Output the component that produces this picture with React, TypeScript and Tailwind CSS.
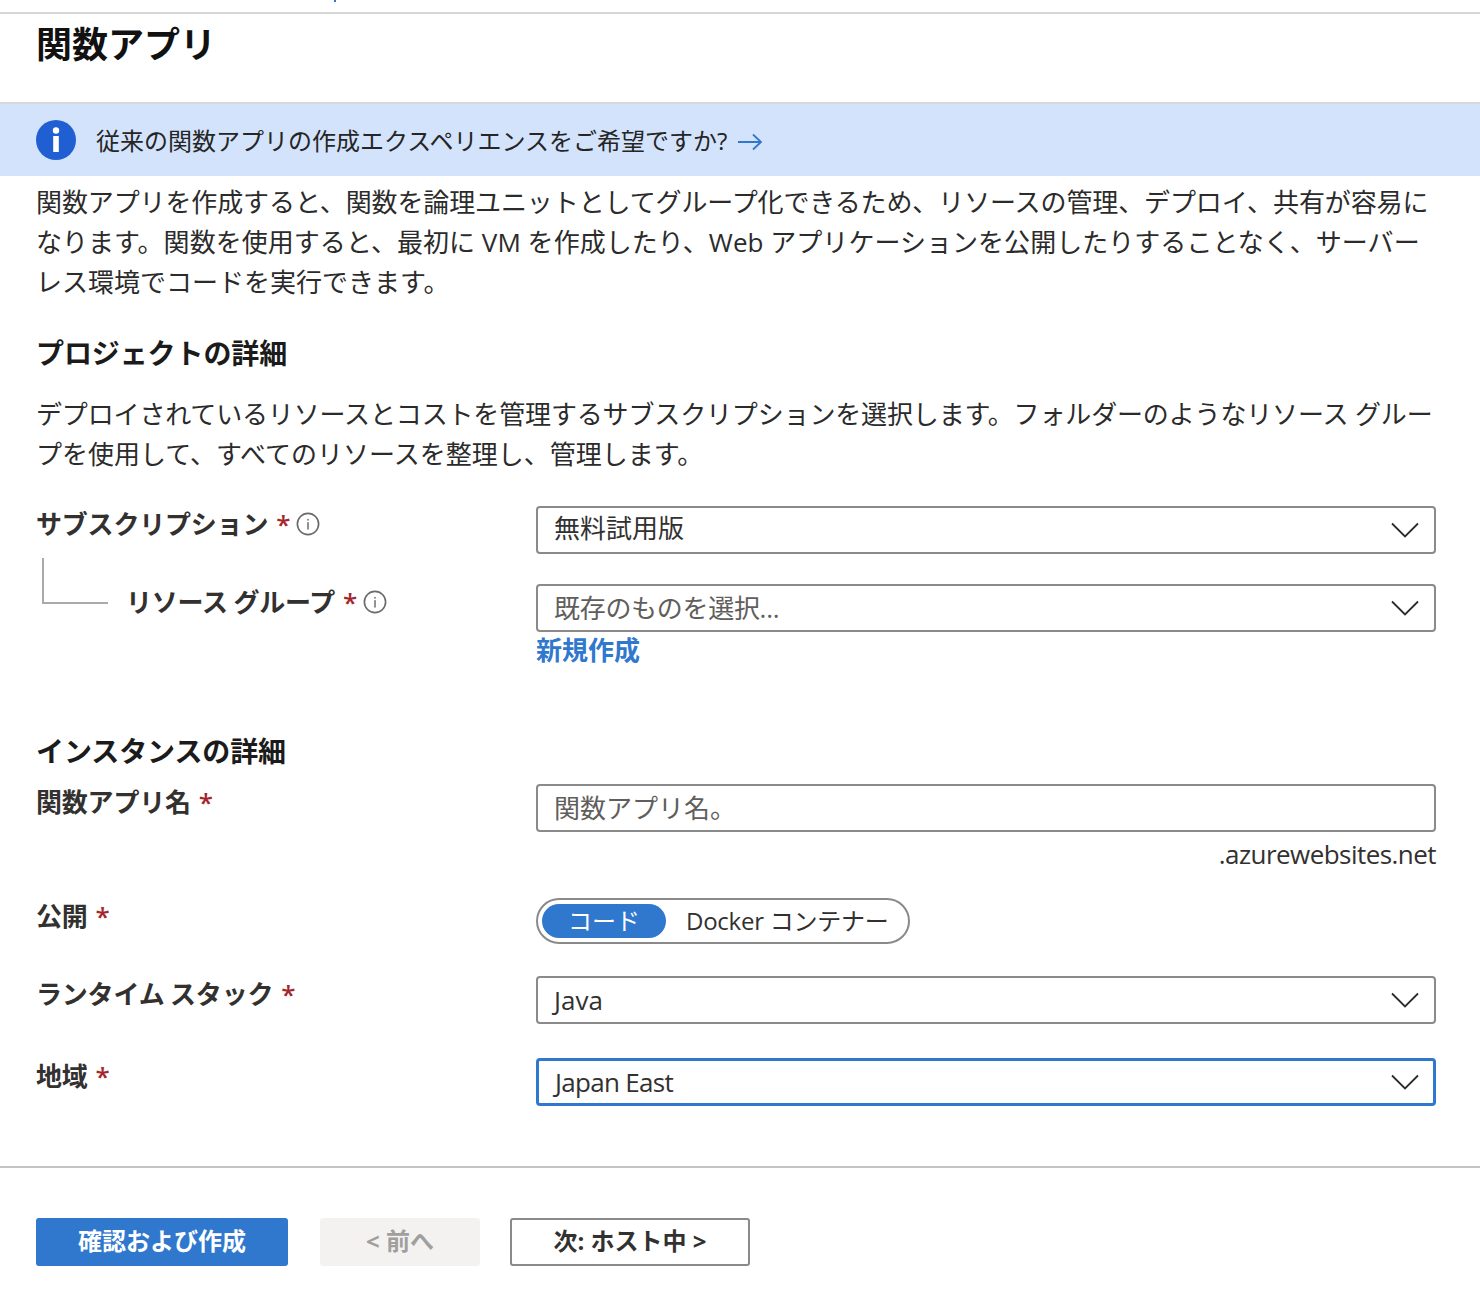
const font = "font-['Open_Sans','Noto_Sans_CJK_JP',sans-serif]";

function Chevron() {
  return (
    <svg width="28" height="16" viewBox="0 0 28 16" fill="none" className="shrink-0">
      <path d="M1 1.5 14 14.5 27 1.5" stroke="#2b2b2b" strokeWidth="1.8" />
    </svg>
  );
}

function InfoDot() {
  return (
    <svg width="24" height="24" viewBox="0 0 26 26" fill="none" className="ml-[6px] shrink-0">
      <circle cx="13" cy="13" r="11.5" stroke="#6b6b6b" strokeWidth="1.8" />
      <rect x="12.2" y="11" width="1.6" height="8" fill="#6b6b6b" />
      <rect x="12.2" y="7.5" width="1.6" height="1.8" fill="#6b6b6b" />
    </svg>
  );
}

function Label({ text, info }: { text: string; info?: boolean }) {
  return (
    <div className="flex items-center h-[36px] text-[26px] font-bold tracking-[-0.2px] text-[#323130] whitespace-nowrap [word-spacing:-1px]">
      <span>{text}</span>
      <span className="ml-[8px] text-[#a4262c] font-semibold">*</span>
      {info && <InfoDot />}
    </div>
  );
}

function Select({ value, muted, focused, textClass }: { value: string; muted?: boolean; focused?: boolean; textClass?: string }) {
  return (
    <div
      className={`flex items-center justify-between h-[48px] rounded-[4px] bg-white pl-[16px] text-[26px] ${
        focused ? "border-[3px] border-[#2f78ce] pr-[14px]" : "border-2 border-[#8a8a8a] pr-[15px]"
      } ${muted ? "text-[#605e5c]" : "text-[#323130]"}`}
    >
      <span className={textClass}>{value}</span>
      <Chevron />
    </div>
  );
}

export default function App() {
  return (
    <div className={`${font} w-[1480px] h-[1294px] bg-white text-[#323130] overflow-hidden`}>
      {/* top edge */}
      <div className="h-[14px] border-b-2 border-[#d6d6d6]">
        <div className="ml-[334px] w-[2px] h-[2px] bg-[#2f78ce]" />
      </div>

      <h1 className="h-[88px] px-[36px] pt-[4px] text-[36px] leading-[54px] font-bold text-[#111]">関数アプリ</h1>

      {/* banner */}
      <div className="flex items-center h-[74px] border-t-2 border-[#d8d8d8] bg-[#d3e3fb] pl-[36px] text-[24px] text-[#252525]">
        <svg width="40" height="40" viewBox="0 0 40 40" className="shrink-0">
          <circle cx="20" cy="20" r="20" fill="#1f5fd2" />
          <circle cx="20" cy="10.5" r="3.2" fill="#fff" />
          <rect x="17.2" y="16" width="5.6" height="16" fill="#fff" />
        </svg>
        <span className="ml-[20px] pt-[2px]">従来の関数アプリの作成エクスペリエンスをご希望ですか?</span>
        <svg width="26" height="18" viewBox="0 0 26 18" fill="none" className="ml-[10px] mt-[4px]">
          <path d="M1 9h23M16 1.5 24 9l-8 7.5" stroke="#2f78ce" strokeWidth="1.8" />
        </svg>
      </div>

      <div className="px-[36px]">
        <p className="mt-[6px] w-[1400px] text-[26px] leading-[40px] text-[#2b2b2b]">
          <span className="tracking-[-0.11px]">関数アプリを作成すると、関数を論理ユニットとしてグループ化できるため、リソースの管理、デプロイ、共有が容易に</span>
          <span className="tracking-[0.04px]">なります。関数を使用すると、最初に VM を作成したり、Web アプリケーションを公開したりすることなく、サーバー</span>
          レス環境でコードを実行できます。
        </p>

        <h2 className="mt-[31px] h-[40px] text-[28px] leading-[40px] tracking-[-0.1px] font-bold text-[#1b1b1b]">プロジェクトの詳細</h2>

        <p className="mt-[21px] w-[1400px] text-[26px] leading-[40px] text-[#2b2b2b]">
          <span className="tracking-[-0.15px]">デプロイされているリソースとコストを管理するサブスクリプションを選択します。フォルダーのようなリソース グルー</span>
          プを使用して、すべてのリソースを整理し、管理します。
        </p>

        {/* subscription */}
        <div className="mt-[32px] grid grid-cols-[500px_900px]">
          <Label text="サブスクリプション" info />
          <Select value="無料試用版" textClass="pb-[4px]" />
        </div>

        {/* resource group */}
        <div className="mt-[30px] grid grid-cols-[500px_900px]">
          <div className="flex items-start">
            <div className="ml-[6px] -mt-[26px] w-[66px] h-[46px] border-l-2 border-b-2 border-[#aaaaaa] shrink-0" />
            <div className="ml-[18px]">
              <Label text="リソース グループ" info />
            </div>
          </div>
          <div>
            <Select value="既存のものを選択..." muted textClass="tracking-[-0.3px]" />
            <div className="h-[37px] text-[26px] leading-[36px] font-bold text-[#2f78ce]">新規作成</div>
          </div>
        </div>

        <h2 className="mt-[62px] h-[40px] text-[28px] leading-[40px] tracking-[-0.1px] font-bold text-[#1b1b1b]">インスタンスの詳細</h2>

        {/* app name */}
        <div className="mt-[13px] grid grid-cols-[500px_900px]">
          <Label text="関数アプリ名" />
          <div>
            <div className="flex items-center h-[48px] rounded-[4px] border-2 border-[#8a8a8a] pl-[16px] text-[26px] text-[#605e5c]">
              関数アプリ名。
            </div>
            <div className="mt-[4px] h-[36px] text-right text-[26px] leading-[36px] tracking-[-0.55px] font-medium text-[#323130]">.azurewebsites.net</div>
          </div>
        </div>

        {/* publish */}
        <div className="mt-[26px] grid grid-cols-[500px_900px]">
          <Label text="公開" />
          <div className="flex items-center w-[374px] h-[46px] rounded-full border-2 border-[#8a8a8a] pl-[4px] text-[24px]">
            <div className="flex items-center justify-center w-[124px] h-[34px] rounded-full bg-[#2f78ce] text-white">コード</div>
            <div className="ml-[20px] tracking-[-0.25px] text-[#323130]">Docker コンテナー</div>
          </div>
        </div>

        {/* runtime */}
        <div className="mt-[32px] grid grid-cols-[500px_900px]">
          <Label text="ランタイム スタック" />
          <Select value="Java" />
        </div>

        {/* region */}
        <div className="mt-[34px] grid grid-cols-[500px_900px]">
          <Label text="地域" />
          <Select value="Japan East" focused textClass="tracking-[-0.7px]" />
        </div>
      </div>

      <div className="mt-[60px] h-[2px] bg-[#c4c4c4]" />

      {/* footer buttons */}
      <div className="mt-[50px] flex pl-[36px] text-[24px] font-bold">
        <button className="w-[252px] h-[48px] pb-[2px] rounded-[3px] bg-[#2f78ce] text-white">確認および作成</button>
        <button className="ml-[32px] w-[160px] h-[48px] pb-[2px] rounded-[3px] bg-[#f3f2f1] text-[#a19f9d]">&lt; 前へ</button>
        <button className="ml-[30px] w-[240px] h-[48px] pb-[2px] rounded-[3px] border-2 border-[#8a8a8a] bg-white text-[#323130]">次: ホスト中 &gt;</button>
      </div>
    </div>
  );
}
